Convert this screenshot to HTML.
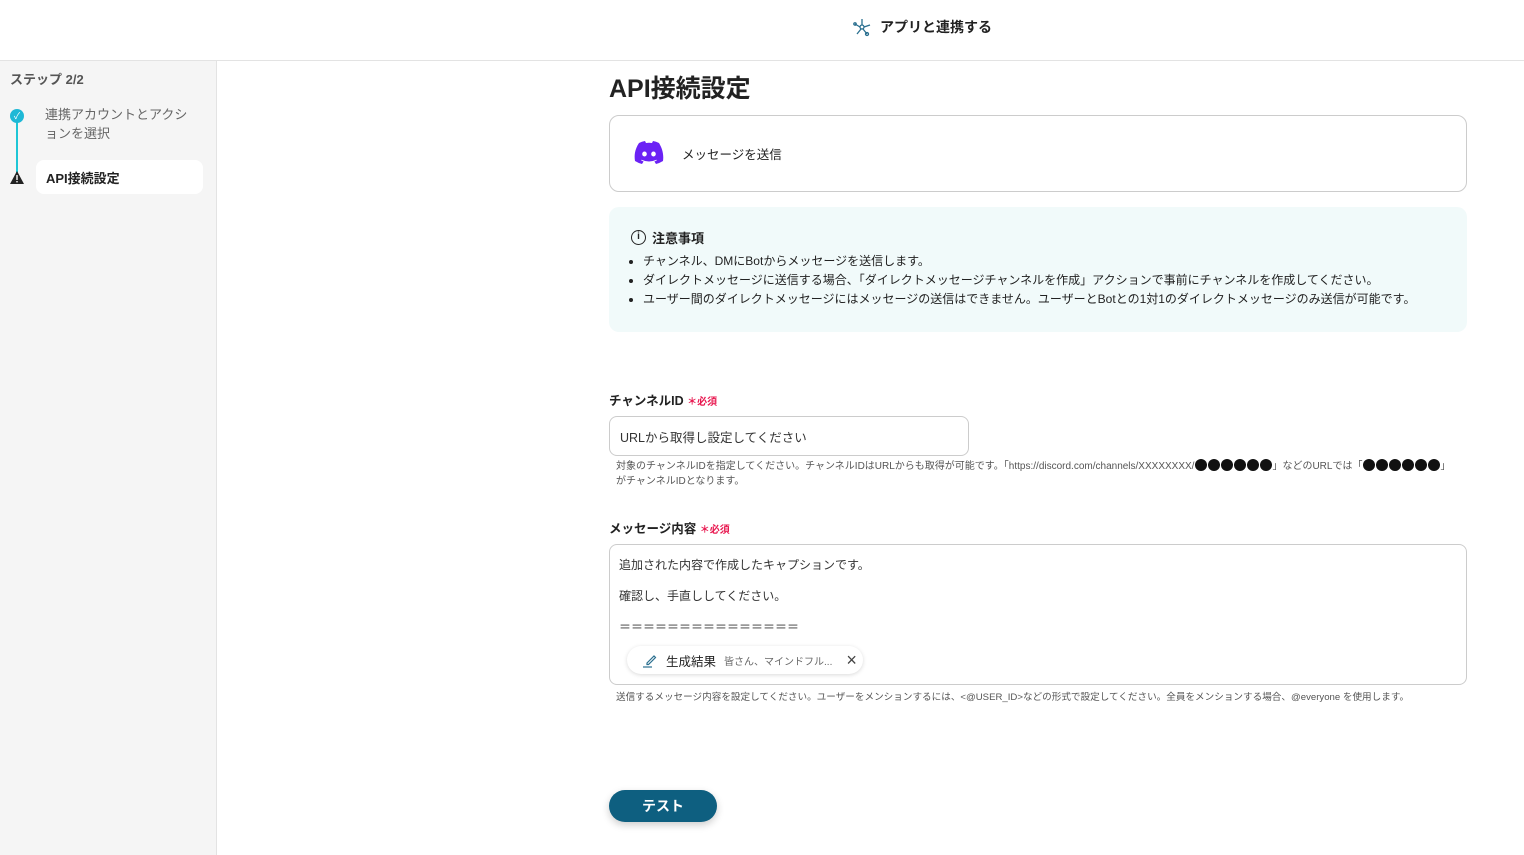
<!DOCTYPE html>
<html><head><meta charset="utf-8"><style>
*{box-sizing:border-box;margin:0;padding:0}
body{width:1524px;height:855px;overflow:hidden;background:#fff;font-family:"Liberation Sans","Noto Sans CJK JP",sans-serif;color:#222;position:relative}
.abs{position:absolute}
.dot{display:inline-block;width:12px;height:12px;border-radius:50%;background:#111;vertical-align:-2px;margin:0 .5px}
</style></head><body>
<div class="abs" style="left:0;top:0;width:1524px;height:61px;border-bottom:1px solid #e3e3e3;background:#fff"></div>
<div class="abs" style="left:852px;top:17px;display:flex;align-items:center;gap:8px;font-size:14px;font-weight:bold;color:#222">
<svg width="20" height="20" viewBox="0 0 20 20" fill="none" stroke="#2a6f8f" stroke-width="1.3"><circle cx="10" cy="10" r="2"/><line x1="10" y1="8" x2="10" y2="2"/><line x1="12" y1="10" x2="18" y2="8"/><line x1="8" y1="10" x2="3" y2="7"/><line x1="9" y1="12" x2="5" y2="17"/><line x1="11" y1="12" x2="15" y2="17"/><circle cx="15" cy="17" r="1.5"/><circle cx="3" cy="7" r="1.2"/></svg>
<span>アプリと連携する</span></div>
<div class="abs" style="left:0;top:61px;width:217px;height:794px;background:#f5f5f5;border-right:1px solid #e3e3e3"></div>
<div class="abs" style="left:10px;top:69px;font-size:13px;font-weight:bold;color:#555">ステップ 2/2</div>
<div class="abs" style="left:16px;top:116px;width:2px;height:60px;background:#1ec6d6"></div>
<div class="abs" style="left:10px;top:109px;width:14px;height:14px;border-radius:50%;background:#1eb8d6;color:#fff;font-size:9px;text-align:center;line-height:14px">✓</div>
<div class="abs" style="left:45px;top:105px;width:150px;font-size:13px;line-height:19px;color:#666">連携アカウントとアクションを選択</div>
<svg class="abs" style="left:10px;top:171px" width="14" height="13" viewBox="0 0 14 13"><path d="M7 0L14 13H0Z" fill="#222"/><rect x="6.3" y="4" width="1.4" height="5" fill="#fff"/><rect x="6.3" y="10" width="1.4" height="1.4" fill="#fff"/></svg>
<div class="abs" style="left:36px;top:160px;width:167px;height:34px;background:#fff;border-radius:8px;font-size:13px;font-weight:bold;padding:8px 10px">API接続設定</div>
<div class="abs" style="left:609px;top:69px;font-size:25px;font-weight:bold">API接続設定</div>
<div class="abs" style="left:609px;top:115px;width:858px;height:77px;border:1px solid #ccc;border-radius:10px"></div>
<svg class="abs" style="left:634px;top:141px" width="30" height="23" viewBox="0 0 30 23"><path d="M25 2A24 24 0 0 0 19 0l-1 2a22 22 0 0 0-6 0L11 0A24 24 0 0 0 5 2C1 8 0 14 1 20a24 24 0 0 0 7 3l1.6-2.5-2.6-1.3.6-.5a17 17 0 0 0 14.8 0l.6.5-2.6 1.3L22 23a24 24 0 0 0 7-3c1-7-1-13-4-18Z" fill="#6b22f5"/><ellipse cx="10.5" cy="13" rx="2.3" ry="2.5" fill="#fff"/><ellipse cx="19.5" cy="13" rx="2.3" ry="2.5" fill="#fff"/></svg>
<div class="abs" style="left:682px;top:144px;font-size:12.5px">メッセージを送信</div>
<div class="abs" style="left:609px;top:207px;width:858px;height:125px;background:#f1fafa;border-radius:10px"></div>
<div class="abs" style="left:631px;top:228px;font-size:13px;font-weight:bold;display:flex;align-items:center;gap:6px"><span style="display:inline-block;width:15px;height:15px;border:1.3px solid #222;border-radius:50%;font-size:10px;text-align:center;line-height:12px">i</span>注意事項</div>
<ul class="abs" style="left:643px;top:252px;font-size:12px;line-height:19px;padding-left:0;list-style:disc">
<li>チャンネル、DMにBotからメッセージを送信します。</li>
<li>ダイレクトメッセージに送信する場合、「ダイレクトメッセージチャンネルを作成」アクションで事前にチャンネルを作成してください。</li>
<li>ユーザー間のダイレクトメッセージにはメッセージの送信はできません。ユーザーとBotとの1対1のダイレクトメッセージのみ送信が可能です。</li>
</ul>
<div class="abs" style="left:609px;top:390px;font-size:12.5px;font-weight:bold">チャンネルID <span style="color:#e8174f;font-size:10px">＊必須</span></div>
<div class="abs" style="left:609px;top:416px;width:360px;height:40px;border:1px solid #ccc;border-radius:8px;font-size:12.5px;padding:10px 10px;color:#333">URLから取得し設定してください</div>
<div class="abs" style="left:616px;top:459px;width:850px;font-size:10px;line-height:15px;color:#555">対象のチャンネルIDを指定してください。チャンネルIDはURLからも取得が可能です。「https://discord.com/channels/XXXXXXXX/<span class="dot"></span><span class="dot"></span><span class="dot"></span><span class="dot"></span><span class="dot"></span><span class="dot"></span>」などのURLでは「<span class="dot"></span><span class="dot"></span><span class="dot"></span><span class="dot"></span><span class="dot"></span><span class="dot"></span>」<br>がチャンネルIDとなります。</div>
<div class="abs" style="left:609px;top:518px;font-size:12.5px;font-weight:bold">メッセージ内容 <span style="color:#e8174f;font-size:10px">＊必須</span></div>
<div class="abs" style="left:609px;top:544px;width:858px;height:141px;border:1px solid #ccc;border-radius:8px"></div>
<div class="abs" style="left:619px;top:550px;font-size:12px;line-height:31px;color:#333">追加された内容で作成したキャプションです。<br>確認し、手直ししてください。<br>＝＝＝＝＝＝＝＝＝＝＝＝＝＝＝</div>
<div class="abs" style="left:627px;top:646px;width:236px;height:28px;background:#fff;border-radius:14px;box-shadow:0 1px 4px rgba(0,0,0,.15);display:flex;align-items:center;padding-left:15px;gap:8px;font-size:12.5px">
<svg width="16" height="16" viewBox="0 0 16 16" fill="none" stroke="#2a6f8f" stroke-width="1.2"><path d="M5 11L12 4l1.5 1.5L6.5 12.5H5Z"/><path d="M1 15h9"/></svg>
<span>生成結果</span><span style="font-size:10px;color:#666">皆さん、マインドフル...</span><span style="font-size:18px;color:#444;margin-left:6px">×</span></div>
<div class="abs" style="left:616px;top:689px;font-size:9.6px;color:#555">送信するメッセージ内容を設定してください。ユーザーをメンションするには、&lt;@USER_ID&gt;などの形式で設定してください。全員をメンションする場合、@everyone を使用します。</div>
<div class="abs" style="left:609px;top:790px;width:108px;height:32px;background:#0e5f80;border-radius:16px;box-shadow:0 3px 8px rgba(0,0,0,.2);color:#fff;font-size:14px;font-weight:bold;text-align:center;line-height:32px">テスト</div>
</body></html>
